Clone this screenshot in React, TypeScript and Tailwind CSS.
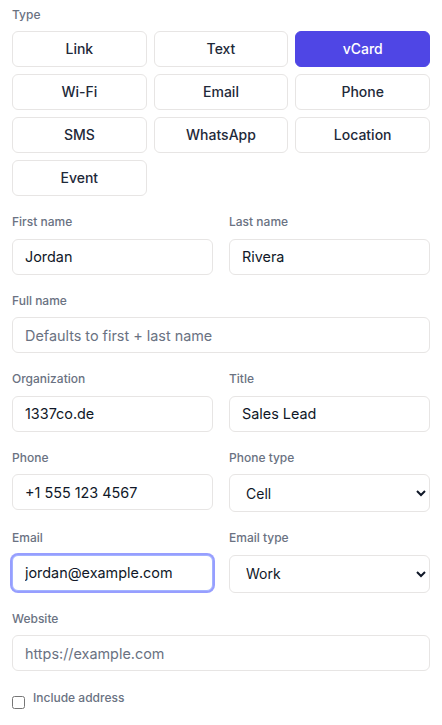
import React from "react";

const types = ["Link", "Text", "vCard", "Wi-Fi", "Email", "Phone", "SMS", "WhatsApp", "Location", "Event"];

const labelCls = "block text-xs leading-4 font-medium text-gray-500 mb-[8.5px]";
const inputCls =
  "block w-full h-9 rounded-md border border-stone-200 bg-white px-3 text-[14.4px] text-gray-900 placeholder:text-gray-500 outline-none";
const selectCls =
  "block w-full h-[38px] rounded-md border border-stone-200 bg-white px-3 text-sm text-gray-900 outline-none";

function Field({ label, value, placeholder, span, focused }: { label: string; value?: string; placeholder?: string; span?: boolean; focused?: boolean }) {
  return (
    <div className={span ? "col-span-2" : ""}>
      <label className={labelCls}>{label}</label>
      <input
        className={
          focused
            ? "block w-full h-9 rounded-md border border-indigo-300 bg-white px-3 text-[14.4px] text-gray-900 outline-none ring-2 ring-indigo-400/80"
            : inputCls
        }
        defaultValue={value}
        placeholder={placeholder}
      />
    </div>
  );
}

function SelectField({ label, value, options }: { label: string; value: string; options: string[] }) {
  return (
    <div>
      <label className={labelCls}>{label}</label>
      <select className={selectCls} defaultValue={value}>
        {options.map((o) => (
          <option key={o}>{o}</option>
        ))}
      </select>
    </div>
  );
}

export default function App() {
  return (
    <div className="bg-white min-h-screen px-3 pt-[7px]" style={{ fontFamily: "Inter, 'Noto Sans', sans-serif" }}>
      <div className="grid grid-cols-2 gap-x-4 gap-y-[18px]">
        <div className="col-span-2">
          <div className="text-xs leading-4 font-medium text-gray-500 mb-2">Type</div>
          <div className="grid grid-cols-3 gap-[7px]">
            {types.map((t) => (
              <button
                key={t}
                className={
                  t === "vCard"
                    ? "h-9 rounded-md border border-[#4f46e5] bg-[#4f46e5] text-sm font-medium text-white"
                    : "h-9 rounded-md border border-stone-200 bg-white text-sm font-medium text-gray-800"
                }
              >
                {t}
              </button>
            ))}
          </div>
        </div>
        <Field label="First name" value="Jordan" />
        <Field label="Last name" value="Rivera" />
        <Field label="Full name" placeholder="Defaults to first + last name" span />
        <Field label="Organization" value="1337co.de" />
        <Field label="Title" value="Sales Lead" />
        <Field label="Phone" value="+1 555 123 4567" />
        <SelectField label="Phone type" value="Cell" options={["Cell", "Home", "Work", "Fax"]} />
        <Field label="Email" value="jordan@example.com" focused />
        <SelectField label="Email type" value="Work" options={["Work", "Home", "Other"]} />
        <Field label="Website" placeholder="https://example.com" span />
        <label className="col-span-2 mt-px flex items-start gap-2">
          <input type="checkbox" className="mt-[6px] h-[13px] w-[13px]" />
          <span className="text-xs leading-4 font-medium text-gray-500">Include address</span>
        </label>
      </div>
    </div>
  );
}
